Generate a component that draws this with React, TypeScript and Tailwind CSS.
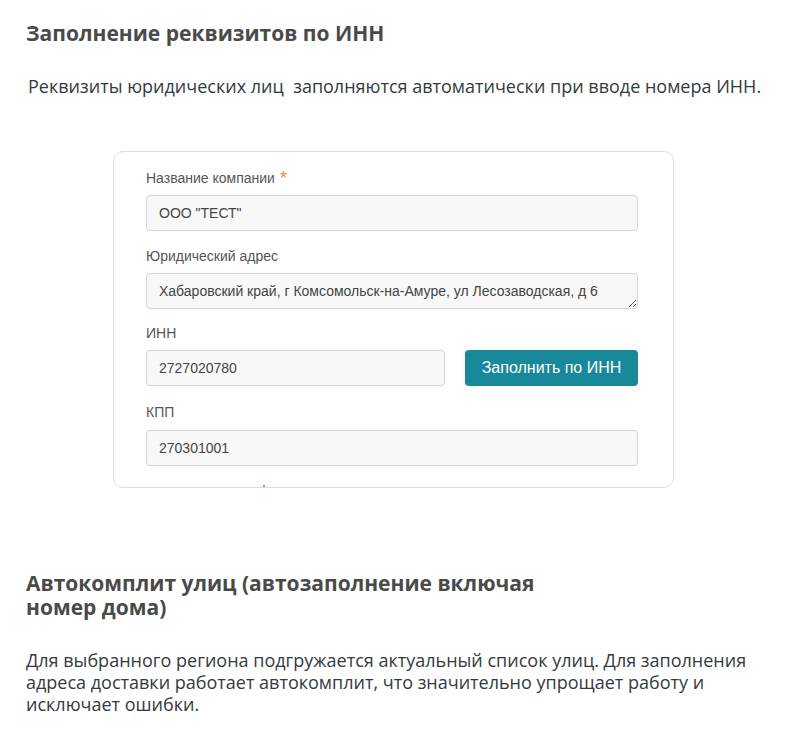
import React from 'react'

const field = 'h-[36px] rounded-[4px] border border-[#d6d6d6] bg-[#f8f8f8] px-[12px] text-[14px] text-[#444] outline-none'
const label = 'block text-[14px] leading-[20px] text-[#555]'

export default function App() {
  return (
    <div className="min-h-[737px] w-[798px] bg-white font-['Open_Sans',sans-serif] text-[#333a40]">
      <div className="px-[26px] pt-[19px]">
        <h2 className="text-[21px] font-bold leading-[28px] text-[#4a4a4a]">Заполнение реквизитов по ИНН</h2>
        <p className="mt-[27px] pl-[2px] text-[18px] leading-[24px]">
          Реквизиты юридических лиц{'\u00a0'} заполняются автоматически при вводе номера ИНН.
        </p>
      </div>

      <div className="ml-[113px] mt-[53px] w-[561px] rounded-[10px] border border-[#dcdcdc] pb-[21px] pl-[32px] pr-[35px] pt-[16px] font-['Liberation_Sans',Arial,sans-serif]">
        <label className="flex items-center gap-[5px] text-[14px] leading-[20px] text-[#555]">
          Название компании <span className="text-[18px] leading-[16px] text-[#f0892a]">*</span>
        </label>
        <input className={`${field} mt-[7px] w-full`} defaultValue='ООО "ТЕСТ"' />

        <label className={`${label} mt-[15px]`}>Юридический адрес</label>
        <textarea
          className={`${field} mt-[7px] block w-full resize-y py-[7px] leading-[20px]`}
          rows={1}
          defaultValue="Хабаровский край, г Комсомольск-на-Амуре, ул Лесозаводская, д 6"
        />

        <label className={`${label} mt-[14px]`}>ИНН</label>
        <div className="mt-[7px] flex items-center gap-[20px]">
          <input className={`${field} w-[299px]`} defaultValue="2727020780" />
          <button className="h-[36px] w-[173px] whitespace-nowrap rounded-[4px] bg-[#17899a] text-[16px] text-white">
            Заполнить по ИНН
          </button>
        </div>

        <label className={`${label} mt-[16px]`}>КПП</label>
        <input className={`${field} mt-[8px] w-full`} defaultValue="270301001" />
        <div className="relative">
          <span className="absolute left-[117px] top-[19px] h-[2px] w-[2px] bg-[#f0892a]" />
        </div>
      </div>

      <div className="px-[26px] pt-[83px]">
        <h2 className="w-[560px] text-[21px] font-bold leading-[24px] text-[#4a4a4a]">
          Автокомплит улиц (автозаполнение включая номер дома)
        </h2>
        <p className="mt-[30px] w-[750px] text-[18px] leading-[22px]">
          Для выбранного региона подгружается актуальный список улиц. Для заполнения адреса доставки работает автокомплит, что значительно упрощает работу и исключает ошибки.
        </p>
      </div>
    </div>
  )
}
